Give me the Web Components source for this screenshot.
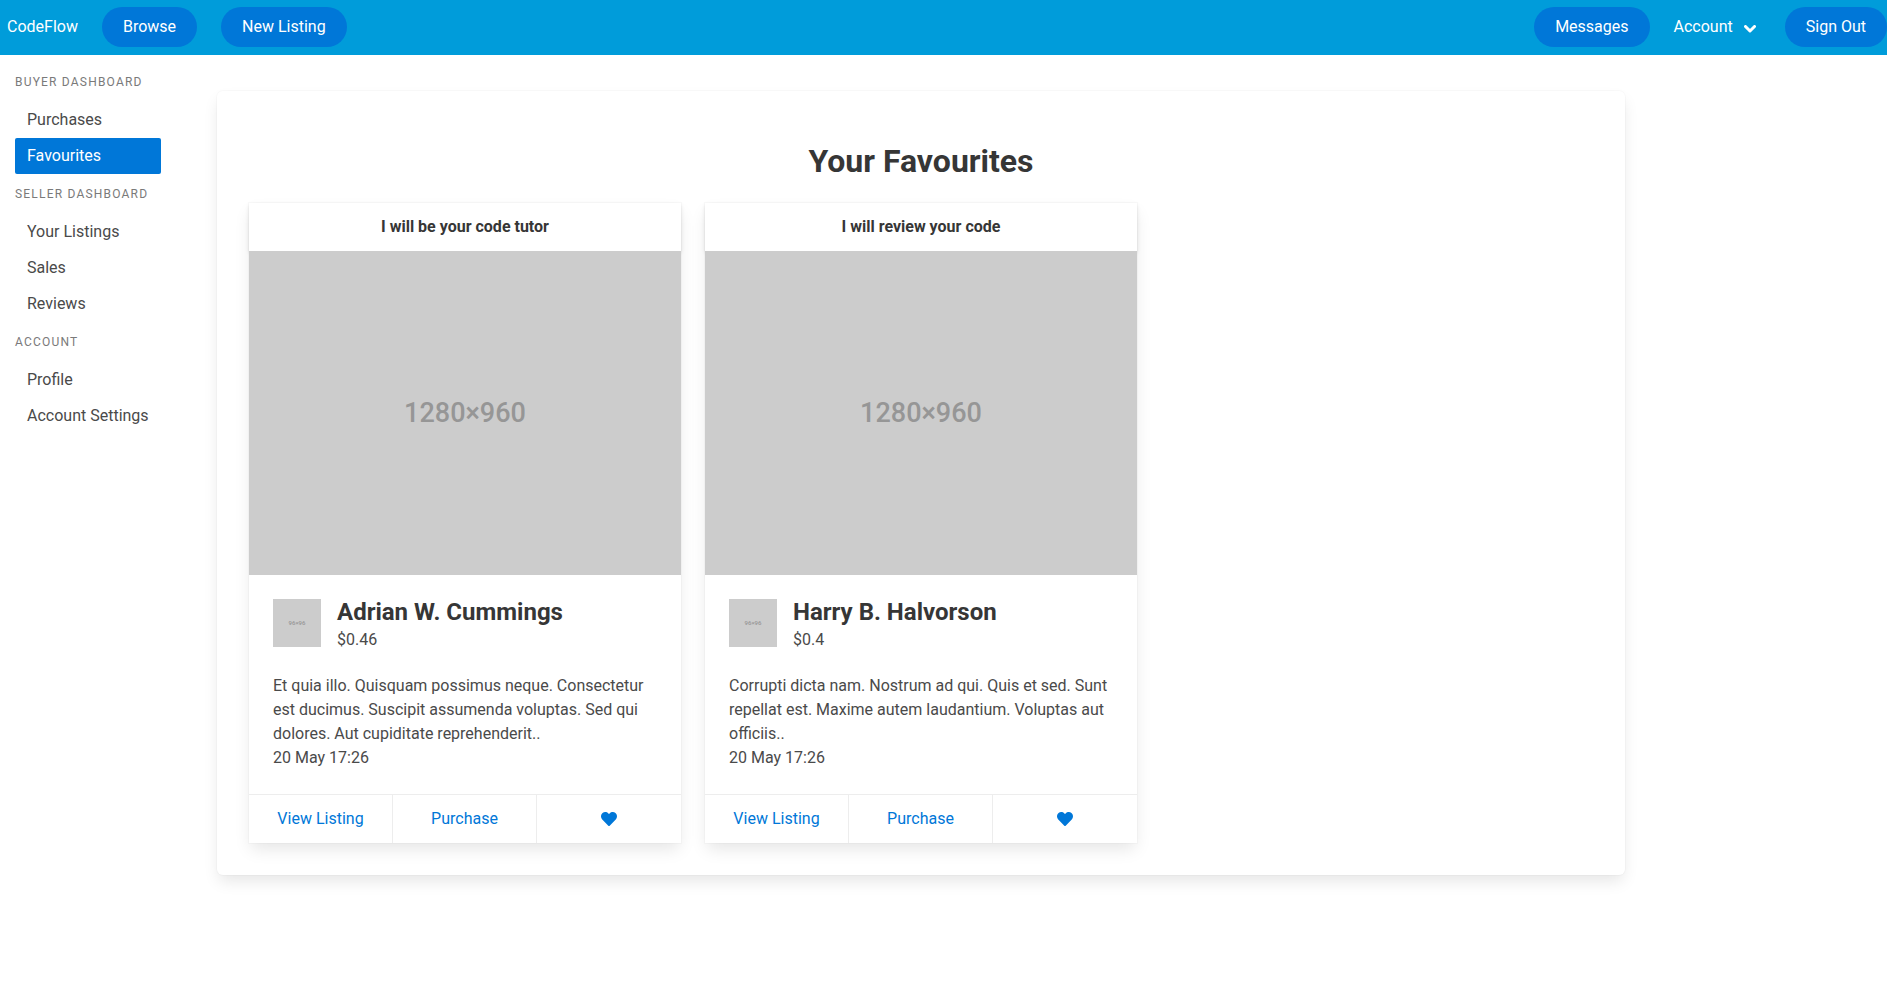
<!DOCTYPE html>
<html lang="en">
<head>
<meta charset="utf-8">
<meta name="viewport" content="width=device-width, initial-scale=1">
<title>CodeFlow</title>
<style>
  :root {
    --bar: #009cda;
    --link: #0077d8;
    --text: #4a4a4a;
    --strong: #363636;
    --muted: #7a7a7a;
    --line: #ededed;
    --lift: 0 8px 16px -2px rgba(10, 10, 10, .1), 0 0 0 1px rgba(10, 10, 10, .02);
  }
  body {
    margin: 0;
    background: #fff;
    color: var(--text);
    font: 16px/24px Roboto, sans-serif;
  }
</style>
</head>
<body>
<cf-app></cf-app>

<template id="cf-app">
  <style>
    :host { display: block; }
    .body { display: flex; align-items: flex-start; gap: 56px; padding-left: 15px; }
    cf-menu { flex: 0 0 146px; }
    main { flex: 0 1 1408px; min-width: 0; margin: 36px 15px 36px 0; }
    @media (max-width: 900px) {
      .body { flex-direction: column; gap: 0; padding-right: 15px; }
      cf-menu { flex: none; width: 100%; }
      main { flex: none; width: 100%; margin-right: 0; }
    }
  </style>
  <cf-navbar></cf-navbar>
  <div class="body">
    <cf-menu>
      <cf-menu-group label="Buyer Dashboard">
        <cf-menu-item>Purchases</cf-menu-item>
        <cf-menu-item active>Favourites</cf-menu-item>
      </cf-menu-group>
      <cf-menu-group label="Seller Dashboard">
        <cf-menu-item>Your Listings</cf-menu-item>
        <cf-menu-item>Sales</cf-menu-item>
        <cf-menu-item>Reviews</cf-menu-item>
      </cf-menu-group>
      <cf-menu-group label="Account">
        <cf-menu-item>Profile</cf-menu-item>
        <cf-menu-item>Account Settings</cf-menu-item>
      </cf-menu-group>
    </cf-menu>
    <main>
      <cf-panel>
        <span slot="title">Your Favourites</span>
        <cf-listing>
          <span slot="title">I will be your code tutor</span>
          <span slot="seller">Adrian W. Cummings</span>
          <span slot="price">$0.46</span>
          <span slot="summary">Et quia illo. Quisquam possimus neque. Consectetur est ducimus. Suscipit assumenda voluptas. Sed qui dolores. Aut cupiditate reprehenderit..</span>
          <time slot="date">20 May 17:26</time>
        </cf-listing>
        <cf-listing>
          <span slot="title">I will review your code</span>
          <span slot="seller">Harry B. Halvorson</span>
          <span slot="price">$0.4</span>
          <span slot="summary">Corrupti dicta nam. Nostrum ad qui. Quis et sed. Sunt repellat est. Maxime autem laudantium. Voluptas aut officiis..</span>
          <time slot="date">20 May 17:26</time>
        </cf-listing>
      </cf-panel>
    </main>
  </div>
</template>

<template id="cf-navbar">
  <style>
    :host { display: block; background: var(--bar); color: #fff; }
    nav { display: flex; flex-wrap: wrap; align-items: center; gap: 0 24px; padding: 7px 0 8px 7px; }
    a { color: inherit; text-decoration: none; white-space: nowrap; }
    .end { display: flex; align-items: center; margin-left: auto; }
    .account {
      display: flex; align-items: center; gap: 11px;
      margin: 0 29px 0 24px; padding: 0;
      border: 0; background: none; color: inherit; font: inherit; cursor: pointer;
    }
    svg { display: block; width: 12px; height: 8px; margin-top: 3px; }
  </style>
  <nav aria-label="Main">
    <a href="#home">CodeFlow</a>
    <cf-pill>Browse</cf-pill>
    <cf-pill>New Listing</cf-pill>
    <div class="end">
      <cf-pill>Messages</cf-pill>
      <button class="account" type="button" aria-haspopup="true">Account
        <svg viewBox="0 0 12 8" aria-hidden="true"><path d="M1.5 1.5 6 6 10.500 1.500" fill="none" stroke="currentColor" stroke-width="3" stroke-linecap="round" stroke-linejoin="round"/></svg>
      </button>
      <cf-pill>Sign Out</cf-pill>
    </div>
  </nav>
</template>

<template id="cf-pill">
  <style>
    :host { display: block; }
    a {
      display: block; padding: 8px 21px; border-radius: 20px;
      background: var(--link); color: #fff; text-decoration: none; white-space: nowrap;
    }
  </style>
  <a href="#"><slot></slot></a>
</template>

<template id="cf-menu">
  <style>
    :host { display: block; padding-top: 18px; }
    aside { display: flex; flex-direction: column; gap: 11px; }
  </style>
  <aside><slot></slot></aside>
</template>

<template id="cf-menu-group">
  <style>
    :host { display: block; }
    p {
      margin: 0 0 11px; color: var(--muted);
      font-size: 12px; line-height: 18px; letter-spacing: .1em; text-transform: uppercase; white-space: nowrap;
    }
  </style>
  <p></p>
  <div role="list"><slot></slot></div>
</template>

<template id="cf-menu-item">
  <style>
    :host { display: block; }
    a {
      display: block; padding: 8px 12px; border-radius: 2px;
      color: var(--text); line-height: 20px; text-decoration: none; white-space: nowrap;
    }
    :host([active]) a { background: var(--link); color: #fff; }
  </style>
  <a href="#"><slot></slot></a>
</template>

<template id="cf-panel">
  <style>
    :host { display: block; padding: 52px 32px 32px; border-radius: 6px; background: #fff; box-shadow: var(--lift); }
    h1 { margin: 0 0 24px; color: var(--strong); font-size: 32px; line-height: 36px; font-weight: 700; text-align: center; }
    .grid { display: grid; grid-template-columns: repeat(3, minmax(0, 1fr)); gap: 24px; align-items: start; }
    @media (max-width: 1300px) { .grid { grid-template-columns: repeat(2, minmax(0, 1fr)); } }
    @media (max-width: 900px) { .grid { grid-template-columns: minmax(0, 1fr); } }
  </style>
  <h1><slot name="title"></slot></h1>
  <div class="grid"><slot></slot></div>
</template>

<template id="cf-placeholder">
  <style>
    :host {
      display: flex; align-items: center; justify-content: center;
      background: #ccc; color: #969696;
      font-weight: 500; line-height: 1;
    }
  </style>
  <slot></slot>
</template>

<template id="cf-listing">
  <style>
    :host { display: block; background: #fff; box-shadow: var(--lift); }
    header { padding: 12px 16px; box-shadow: 0 2px 4px rgba(10, 10, 10, .1); }
    h2, h3, p { margin: 0; }
    h2 { color: var(--strong); font-size: 16px; line-height: 24px; font-weight: 700; text-align: center; }
    .cover { position: relative; aspect-ratio: 4 / 3; font-size: 27px; }
    .content { padding: 24px; }
    .seller { display: flex; gap: 16px; margin-bottom: 22px; }
    .avatar { flex: none; width: 48px; height: 48px; font-size: 6px; }
    h3 { margin-bottom: 2px; color: var(--strong); font-size: 24px; line-height: 27px; font-weight: 700; }
    footer { display: grid; grid-template-columns: repeat(3, 1fr); border-top: 1px solid var(--line); }
    footer > * {
      display: flex; align-items: center; justify-content: center; box-sizing: border-box; height: 48px;
      margin: 0; padding: 0; border: 0; border-right: 1px solid var(--line);
      background: none; color: var(--link); font: inherit; text-decoration: none; cursor: pointer;
    }
    footer > :last-child { border-right: 0; }
    svg { display: block; width: 16px; height: 16px; }
  </style>
  <article>
    <header><h2><slot name="title"></slot></h2></header>
    <cf-placeholder class="cover">1280×960</cf-placeholder>
    <div class="content">
      <div class="seller">
        <cf-placeholder class="avatar">96×96</cf-placeholder>
        <div>
          <h3><slot name="seller"></slot></h3>
          <p><slot name="price"></slot></p>
        </div>
      </div>
      <p><slot name="summary"></slot></p>
      <slot name="date"></slot>
    </div>
    <footer>
      <a href="#listing">View Listing</a>
      <a href="#purchase">Purchase</a>
      <button type="button" aria-label="Remove from favourites">
        <svg viewBox="0 0 512 512" aria-hidden="true"><path fill="currentColor" d="M462.300 62.600C407.500 15.900 326 24.300 275.700 76.200L256 96.500l-19.700-20.300C186.100 24.300 104.500 15.900 49.700 62.600c-62.800 53.600-66.100 149.800-9.900 207.900l193.500 199.800c12.500 12.900 32.800 12.900 45.300 0l193.500-199.800c56.300-58.100 53-154.300-9.800-207.900z"/></svg>
      </button>
    </footer>
  </article>
</template>

<script>
  class CfElement extends HTMLElement {
    constructor() {
      super();
      const template = document.getElementById(this.localName);
      this.attachShadow({ mode: "open" }).append(template.content.cloneNode(true));
    }
  }

  class CfMenuGroup extends CfElement {
    connectedCallback() {
      const label = this.getAttribute("label");
      this.shadowRoot.querySelector("p").textContent = label;
      this.shadowRoot.querySelector("[role=list]").setAttribute("aria-label", label);
    }
  }

  class CfMenuItem extends CfElement {
    connectedCallback() {
      this.setAttribute("role", "listitem");
      if (this.hasAttribute("active")) {
        this.shadowRoot.querySelector("a").setAttribute("aria-current", "page");
      }
    }
  }

  customElements.define("cf-pill", class extends CfElement {});
  customElements.define("cf-navbar", class extends CfElement {});
  customElements.define("cf-menu", class extends CfElement {});
  customElements.define("cf-menu-group", CfMenuGroup);
  customElements.define("cf-menu-item", CfMenuItem);
  customElements.define("cf-placeholder", class extends CfElement {});
  customElements.define("cf-listing", class extends CfElement {});
  customElements.define("cf-panel", class extends CfElement {});
  customElements.define("cf-app", class extends CfElement {});
</script>
</body>
</html>
